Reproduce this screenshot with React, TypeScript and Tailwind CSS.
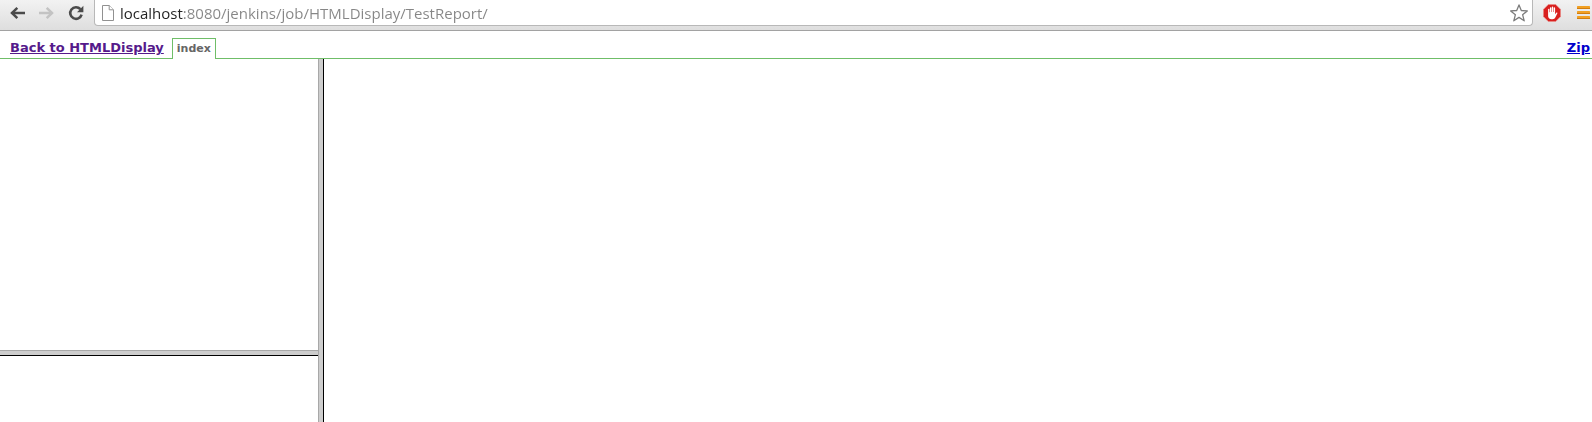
import React from 'react';

const BackIcon = ({ className }: { className: string }) => (
    <svg viewBox="0 0 15 12" className={`h-3 w-[15px] ${className}`} fill="none" stroke="currentColor" strokeWidth="2.5" aria-hidden="true">
        <path d="M1.8 6H15" />
        <path d="M7.3.9 2 6l5.3 5.1" />
    </svg>
);

const ReloadIcon = () => (
    <svg viewBox="0 0 16 16" className="h-4 w-4" aria-hidden="true">
        <path d="M12.4 4.2A5.8 5.8 0 1 0 13.6 9.6" fill="none" stroke="#4b4b4b" strokeWidth="2.6" />
        <path d="M15.4.8v6.4H9Z" fill="#4b4b4b" />
    </svg>
);

const PageIcon = () => (
    <svg viewBox="0 0 12 16" className="h-4 w-3 shrink-0" fill="#fff" stroke="#919191" aria-hidden="true">
        <path d="M.5.5h6.7l4.3 4.3v10.7H.5Z" />
        <path d="M7.2.5v4.3h4.3" />
    </svg>
);

const StarIcon = () => (
    <svg viewBox="0 0 18 18" className="h-[18px] w-[18px]" fill="#fff" stroke="#7c7c7c" strokeWidth="1.3" strokeLinejoin="round" aria-hidden="true">
        <path d="m9 .9 2.3 5.6 6 .4-4.7 3.8 1.6 6.1L9 13.4l-5.2 3.4 1.6-6.1L.7 6.9l6-.4Z" />
    </svg>
);

const BlockerIcon = () => (
    <svg viewBox="0 0 18 18" className="h-[18px] w-[18px]" aria-hidden="true">
        <path d="M5.4.4h7.2l5 5v7.2l-5 5H5.4l-5-5V5.4Z" fill="#d9201f" stroke="#e88b88" strokeWidth=".8" />
        <path
            d="M5.1 5.3c0-.9 1.3-.9 1.3 0v3h.5V3.9c0-1 1.4-1 1.4 0v4h.5V3.2c0-1 1.4-1 1.4 0v4.7h.5V4.1c0-1 1.4-1 1.4 0v6.1l1-1.3c.6-.7 1.6-.2 1.2.6l-2 4c-.6 1.2-1.4 1.7-2.7 1.7H8.4c-2 0-3.3-1.2-3.3-3.2Z"
            fill="#fff"
        />
    </svg>
);

const MenuIcon = () => (
    <svg viewBox="0 0 13 13" className="h-[13px] w-[13px]" aria-hidden="true">
        {[0, 5, 10].map((y) => (
            <g key={y}>
                <rect y={y} width="13" height="3" rx=".6" fill="#f1a023" />
                <rect y={y + 2} width="13" height="1" fill="#d17d10" />
            </g>
        ))}
    </svg>
);

const Toolbar = () => (
    <header className="flex h-[31px] items-start border-b border-[#a2a2a2] bg-linear-to-b from-[#f2f2f2] to-[#dedede]">
        <nav className="flex h-[25px] items-center gap-[14px] pl-[10px]">
            <button type="button" aria-label="Back"><BackIcon className="text-[#4b4b4b]" /></button>
            <button type="button" aria-label="Forward" disabled><BackIcon className="rotate-180 text-[#c3c3c3]" /></button>
            <button type="button" aria-label="Reload"><ReloadIcon /></button>
        </nav>
        <div className="ml-[10px] flex h-[26px] grow items-center rounded-b border border-t-0 border-[#b8b8b8] bg-white pr-1 pl-[7px]">
            <PageIcon />
            {/* host name is darker than the rest of the address */}
            <input
                type="text"
                aria-label="Address"
                defaultValue="localhost:8080/jenkins/job/HTMLDisplay/TestReport/"
                className="ml-[6px] h-[25px] min-w-0 grow bg-linear-to-r from-[#222] from-[63px] to-[#868686] to-[63px] bg-clip-text font-['Open_Sans','Noto_Sans',sans-serif] text-[15px] text-transparent outline-none"
            />
            <button type="button" aria-label="Bookmark this page"><StarIcon /></button>
        </div>
        <div className="flex h-[25px] items-center gap-4 pr-[2px] pl-[10px]">
            <button type="button" aria-label="Ad blocker"><BlockerIcon /></button>
            <button type="button" aria-label="Menu"><MenuIcon /></button>
        </div>
    </header>
);

const ReportTabs = () => (
    <div className="flex h-7 items-end border-b border-[#6fbe68] pr-[2px] pl-[10px] text-[13px] leading-4 font-bold">
        <a href="#back" className="mb-[2px] text-[#551a8b] underline">Back to HTMLDisplay</a>
        <button type="button" className="-mb-px ml-2 h-[21px] border border-b-0 border-[#6fbe68] bg-white px-1 text-[11px] font-bold text-[#666]">
            index
        </button>
        <a href="#zip" className="mb-[2px] ml-auto text-[#0000cc] underline">Zip</a>
    </div>
);

export default function App() {
    return (
        <div className="flex min-h-screen flex-col bg-white font-['DejaVu_Sans',Verdana,sans-serif]">
            <Toolbar />
            <ReportTabs />
            <main className="flex grow">
                <aside className="flex w-1/5 flex-col">
                    <section className="grow-22" />
                    <div className="h-[6px] border-t border-b border-t-[#a8a8a8] border-b-black bg-[#cdcdcd]" />
                    <section className="grow-5" />
                </aside>
                <div className="w-[6px] border-r border-l border-r-black border-l-[#a8a8a8] bg-[#cdcdcd]" />
                <section className="grow" />
            </main>
        </div>
    );
}
